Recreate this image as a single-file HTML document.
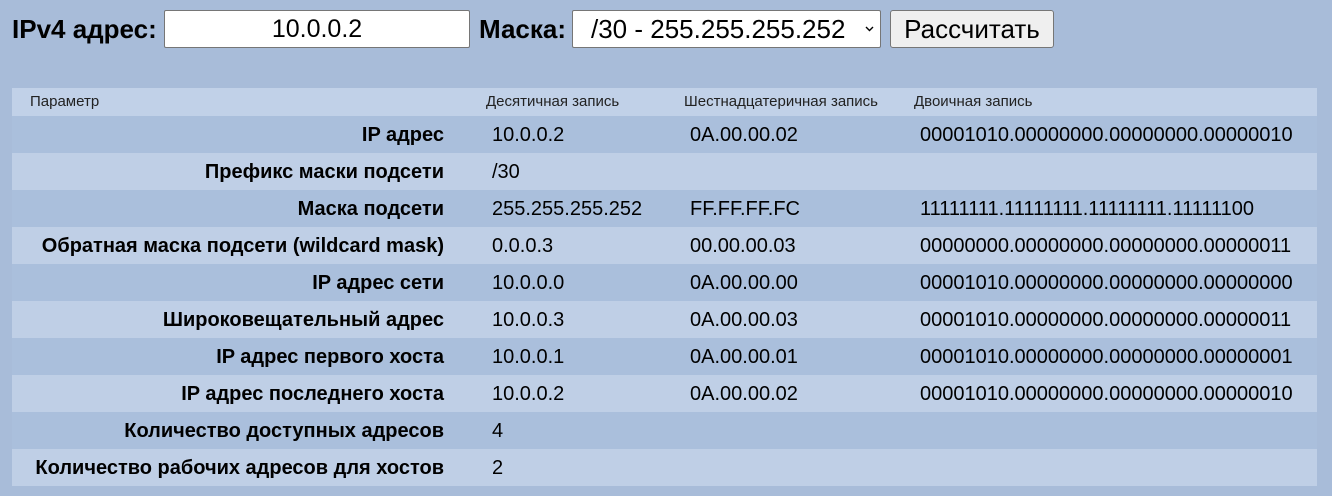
<!DOCTYPE html>
<html><head><meta charset="utf-8"><style>
body{margin:0;width:1332px;height:496px;background:#a8bcd9;font-family:"Liberation Sans",Arial,sans-serif;color:#000;position:relative;overflow:hidden}
.a{position:absolute;white-space:nowrap}
.lbl{font-weight:bold;font-size:26px;top:14px}
.box{position:absolute;top:10px;height:36px;background:#fff;border:1px solid #767676;border-radius:2px;font-size:25px;line-height:36px;white-space:nowrap}
.btn{position:absolute;left:890px;top:10px;width:162px;height:36px;background:#efefef;border:1px solid #767676;border-radius:3px;font-size:26px;line-height:36px;text-align:center}
.row{position:absolute;left:12px;width:1305px;height:37px;font-size:20px}
.row div{position:absolute;top:8px;white-space:nowrap}
.l{right:873px;font-weight:bold;text-align:right}
.c1{left:480px}.c2{left:678px}.c3{left:908px}
.d{background:#aabfdc}.li{background:#bfcfe6}
.hd{position:absolute;left:12px;top:88px;width:1305px;height:28px;background:#c1d1e8;font-size:15px;color:#222}
.hd div{position:absolute;top:5px;white-space:nowrap}
</style></head><body>
<div class="a lbl" style="left:12px">IPv4 адрес:</div>
<div class="box" style="left:164px;width:304px;text-align:center">10.0.0.2</div>
<div class="a lbl" style="left:479px">Маска:</div>
<div class="box" style="left:572px;width:307px;font-size:26px"><span style="margin-left:18px">/30 - 255.255.255.252</span><svg style="position:absolute;right:6px;top:15px" width="9" height="6" viewBox="0 0 9 6"><path d="M1 1l3.5 3.5L8 1" fill="none" stroke="#000" stroke-width="1.4"/></svg></div>
<div class="btn">Рассчитать</div>
<div class="hd"><div style="left:18px">Параметр</div><div style="left:474px">Десятичная запись</div><div style="left:672px">Шестнадцатеричная запись</div><div style="left:902px">Двоичная запись</div></div>
<div class="row d" style="top:116px"><div class="l">IP адрес</div><div class="c1">10.0.0.2</div><div class="c2">0A.00.00.02</div><div class="c3">00001010.00000000.00000000.00000010</div></div>
<div class="row li" style="top:153px"><div class="l">Префикс маски подсети</div><div class="c1">/30</div></div>
<div class="row d" style="top:190px"><div class="l">Маска подсети</div><div class="c1">255.255.255.252</div><div class="c2">FF.FF.FF.FC</div><div class="c3">11111111.11111111.11111111.11111100</div></div>
<div class="row li" style="top:227px"><div class="l">Обратная маска подсети (wildcard mask)</div><div class="c1">0.0.0.3</div><div class="c2">00.00.00.03</div><div class="c3">00000000.00000000.00000000.00000011</div></div>
<div class="row d" style="top:264px"><div class="l">IP адрес сети</div><div class="c1">10.0.0.0</div><div class="c2">0A.00.00.00</div><div class="c3">00001010.00000000.00000000.00000000</div></div>
<div class="row li" style="top:301px"><div class="l">Широковещательный адрес</div><div class="c1">10.0.0.3</div><div class="c2">0A.00.00.03</div><div class="c3">00001010.00000000.00000000.00000011</div></div>
<div class="row d" style="top:338px"><div class="l">IP адрес первого хоста</div><div class="c1">10.0.0.1</div><div class="c2">0A.00.00.01</div><div class="c3">00001010.00000000.00000000.00000001</div></div>
<div class="row li" style="top:375px"><div class="l">IP адрес последнего хоста</div><div class="c1">10.0.0.2</div><div class="c2">0A.00.00.02</div><div class="c3">00001010.00000000.00000000.00000010</div></div>
<div class="row d" style="top:412px"><div class="l">Количество доступных адресов</div><div class="c1">4</div></div>
<div class="row li" style="top:449px"><div class="l">Количество рабочих адресов для хостов</div><div class="c1">2</div></div>
</body></html>
